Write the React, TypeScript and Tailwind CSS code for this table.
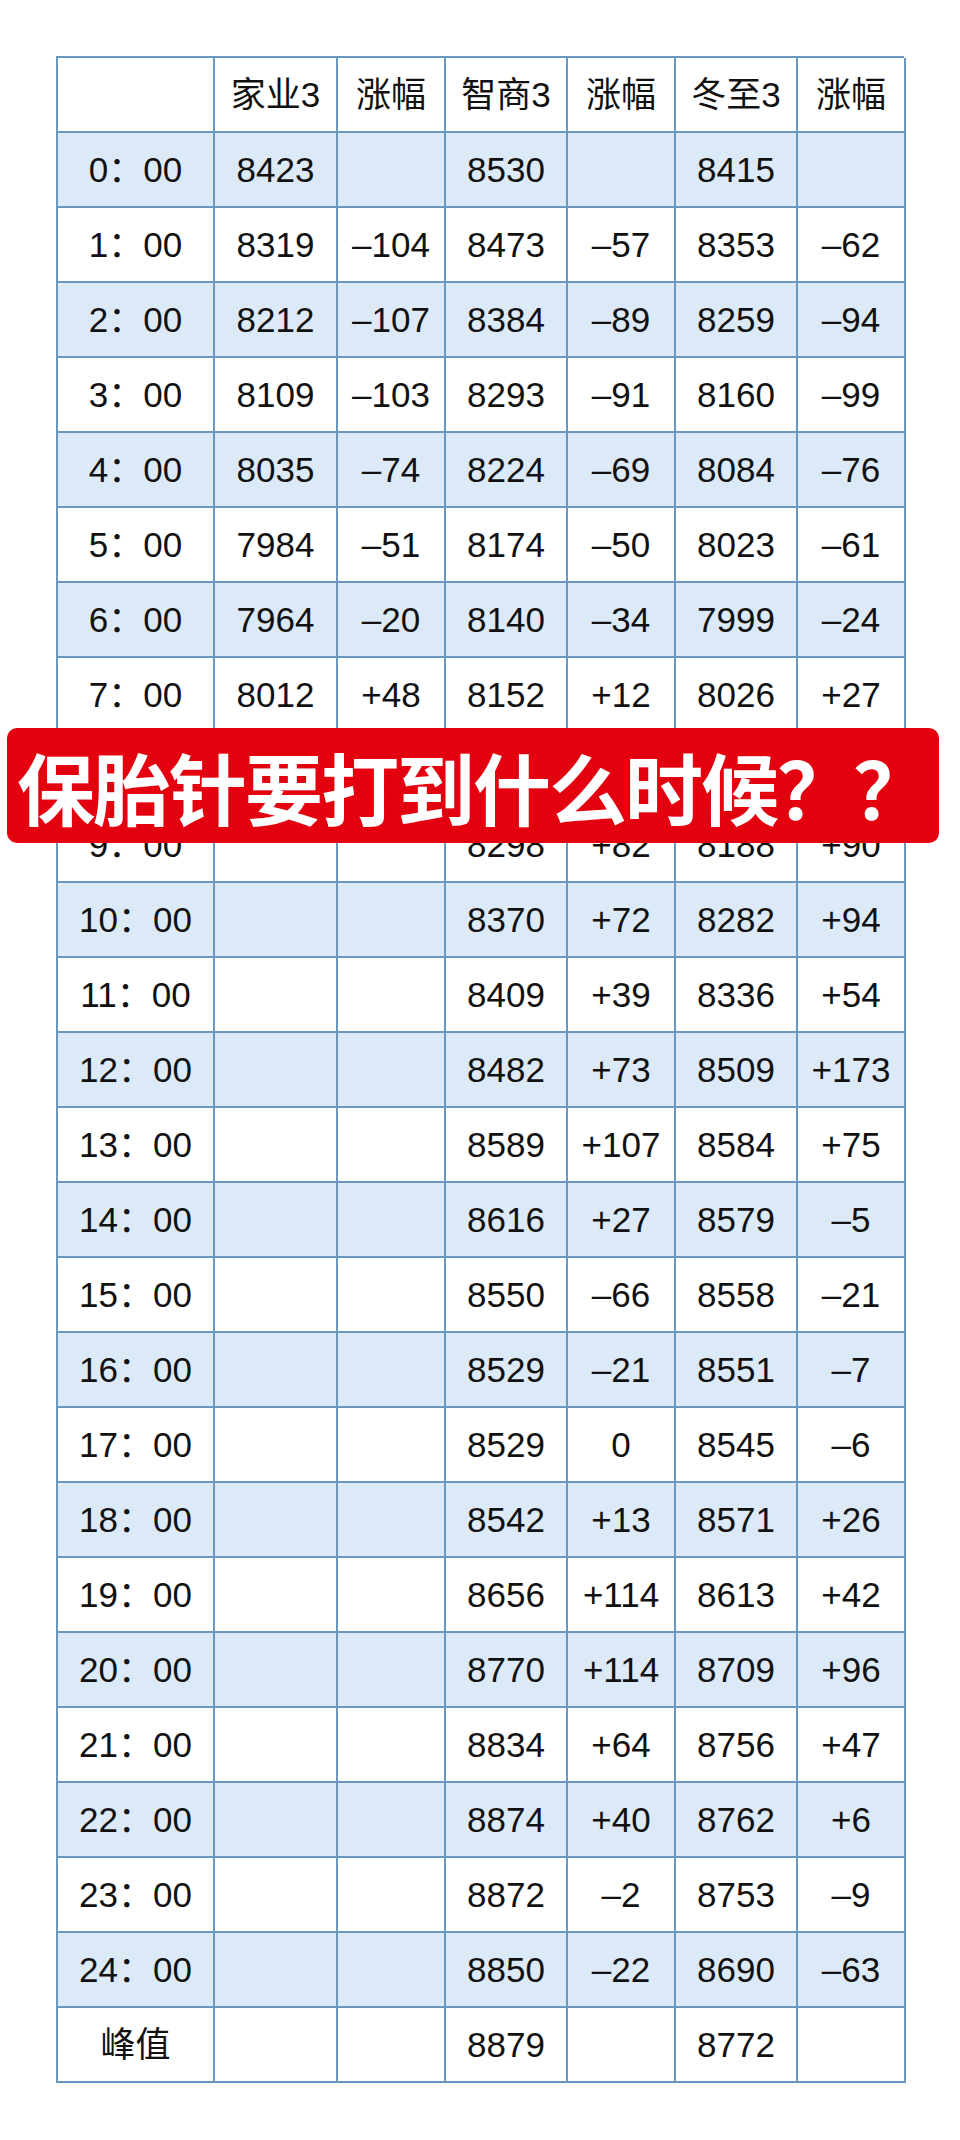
import React from "react";

type Row = [string, string, string, string, string, string, string];

const rows: Row[] = [
  ["0：00", "8423", "", "8530", "", "8415", ""],
  ["1：00", "8319", "–104", "8473", "–57", "8353", "–62"],
  ["2：00", "8212", "–107", "8384", "–89", "8259", "–94"],
  ["3：00", "8109", "–103", "8293", "–91", "8160", "–99"],
  ["4：00", "8035", "–74", "8224", "–69", "8084", "–76"],
  ["5：00", "7984", "–51", "8174", "–50", "8023", "–61"],
  ["6：00", "7964", "–20", "8140", "–34", "7999", "–24"],
  ["7：00", "8012", "+48", "8152", "+12", "8026", "+27"],
  ["8：00", "", "", "8216", "+64", "8098", "+72"],
  ["9：00", "", "", "8298", "+82", "8188", "+90"],
  ["10：00", "", "", "8370", "+72", "8282", "+94"],
  ["11：00", "", "", "8409", "+39", "8336", "+54"],
  ["12：00", "", "", "8482", "+73", "8509", "+173"],
  ["13：00", "", "", "8589", "+107", "8584", "+75"],
  ["14：00", "", "", "8616", "+27", "8579", "–5"],
  ["15：00", "", "", "8550", "–66", "8558", "–21"],
  ["16：00", "", "", "8529", "–21", "8551", "–7"],
  ["17：00", "", "", "8529", "0", "8545", "–6"],
  ["18：00", "", "", "8542", "+13", "8571", "+26"],
  ["19：00", "", "", "8656", "+114", "8613", "+42"],
  ["20：00", "", "", "8770", "+114", "8709", "+96"],
  ["21：00", "", "", "8834", "+64", "8756", "+47"],
  ["22：00", "", "", "8874", "+40", "8762", "+6"],
  ["23：00", "", "", "8872", "–2", "8753", "–9"],
  ["24：00", "", "", "8850", "–22", "8690", "–63"],
  ["峰值", "", "", "8879", "", "8772", ""],
];

const header = ["", "家业3", "涨幅", "智商3", "涨幅", "冬至3", "涨幅"];

function Cell({ text, blue }: { text: string; blue: boolean }) {
  return (
    <div
      className={
        "flex h-[75px] items-center justify-center border-b-2 border-r-2 border-[#6a97c0] text-[35px] leading-none text-[#111111] " +
        (blue ? "bg-[#dce9f6]" : "bg-white")
      }
    >
      {text}
    </div>
  );
}

export default function App() {
  return (
    <div
      className="relative h-[2140px] w-[960px] overflow-hidden bg-white pl-[56px] pt-[56px]"
      style={{ fontFamily: '"Liberation Sans", "Noto Sans CJK SC", sans-serif' }}
    >
      <div className="grid w-[848px] grid-cols-[157px_123px_108px_122px_108px_122px_108px] border-l-2 border-t-2 border-[#6a97c0]">
        {header.map((h, i) => (
          <Cell key={"h" + i} text={h} blue={false} />
        ))}
        {rows.map((r, ri) =>
          r.map((c, ci) => (
            <Cell key={ri + "-" + ci} text={c} blue={ri % 2 === 0 && ri < 25} />
          ))
        )}
      </div>

      <div className="absolute left-[7px] top-[728px] flex h-[115px] w-[932px] items-center justify-center rounded-[10px] bg-[#e3000f]">
        <span
          className="whitespace-nowrap text-[78px] font-bold leading-none tracking-[-2px] text-white"
          style={{ fontFamily: '"Noto Sans CJK SC", sans-serif' }}
        >
          保胎针要打到什么时候？？
        </span>
      </div>
    </div>
  );
}
